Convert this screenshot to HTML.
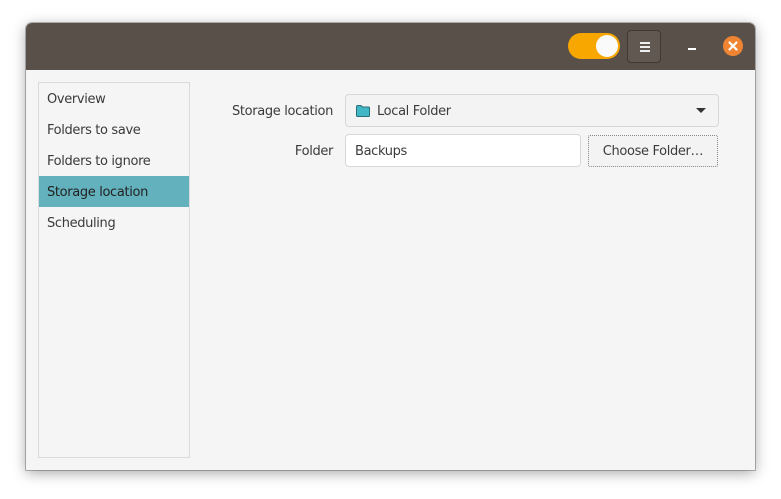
<!DOCTYPE html>
<html><head><meta charset="utf-8"><style>
*{box-sizing:border-box;margin:0;padding:0}
body{width:781px;height:499px;background:#fff;font-family:"DejaVu Sans","Liberation Sans",sans-serif;font-size:13px;letter-spacing:-0.35px;color:#3c3c3c;position:relative;overflow:hidden}
.win{position:absolute;left:26px;top:23px;width:729px;height:447px;background:#f5f5f5;border-radius:6px 6px 0 0;box-shadow:0 3px 14px rgba(0,0,0,.35),0 0 0 1px rgba(0,0,0,.25)}
.hdr{position:absolute;left:0;top:0;width:729px;height:47px;background:#5a504a;border-radius:6px 6px 0 0}
.tog{position:absolute;left:542px;top:10px;width:52px;height:26px;border-radius:13px;background:#f7a700}
.tog i{position:absolute;right:2px;top:2px;width:22px;height:22px;border-radius:50%;background:#fafafa}
.menu{position:absolute;left:601px;top:7px;width:34px;height:33px;border-radius:4px;background:#625852;border:1px solid #3f3833}
.menu b{position:absolute;left:12px;width:10px;height:2px;background:#eee}
.min{position:absolute;left:662px;top:25px;width:8px;height:2px;background:#fff}
.cls{position:absolute;left:697px;top:13px;width:20px;height:20px;border-radius:50%;background:#ef8533}
.side{position:absolute;left:12px;top:59px;width:152px;height:376px;border:1px solid #dadada;background:#f5f5f5}
.side div{height:31px;line-height:33px;padding-left:8px;color:#3a3a3a}
.side .sel{background:#63b1bc;color:#222}
.lbl{position:absolute;text-align:right;color:#3a3a3a}
.combo{position:absolute;left:319px;top:71px;width:374px;height:33px;border:1px solid #d8d8d8;border-radius:4px;background:#f3f3f3}
.entry{position:absolute;left:319px;top:111px;width:236px;height:33px;border:1px solid #d8d8d8;border-radius:4px;background:#fff;padding-left:9px;line-height:34px}
.btn{position:absolute;left:562px;top:112px;width:130px;height:32px;border:1px dotted #888;border-radius:2px;background:#f3f3f3;text-align:center;line-height:32px}
</style></head><body>
<div class="win">
 <div class="hdr">
  <div class="tog"><i></i></div>
  <div class="menu"><b style="top:11px"></b><b style="top:15px"></b><b style="top:19px"></b></div>
  <div class="min"></div>
  <div class="cls"><svg width="20" height="20"><path d="M6.5 6.5l7 7M13.5 6.5l-7 7" stroke="#fff" stroke-width="2.2" stroke-linecap="round"/></svg></div>
 </div>
 <div class="side">
  <div>Overview</div><div>Folders to save</div><div>Folders to ignore</div><div class="sel">Storage location</div><div>Scheduling</div>
 </div>
 <div class="lbl" style="left:150px;width:157px;top:81px">Storage location</div>
 <div class="lbl" style="left:150px;width:157px;top:121px">Folder</div>
 <div class="combo">
  <svg style="position:absolute;left:10px;top:9px" width="14" height="13" viewBox="0 0 14 13"><path d="M0.5 2.5a1 1 0 0 1 1-1h3.5l1.5 1.5h6a1 1 0 0 1 1 1v7.5a1 1 0 0 1-1 1h-11a1 1 0 0 1-1-1z" fill="#41b6c4" stroke="#2a6f78" stroke-width="1"/></svg>
  <span style="position:absolute;left:31px;top:9px">Local Folder</span>
  <svg style="position:absolute;left:350px;top:13px" width="10" height="6"><path d="M0 0h10L5 5z" fill="#333"/></svg>
 </div>
 <div class="entry">Backups</div>
 <div class="btn">Choose Folder…</div>
</div>
</body></html>
